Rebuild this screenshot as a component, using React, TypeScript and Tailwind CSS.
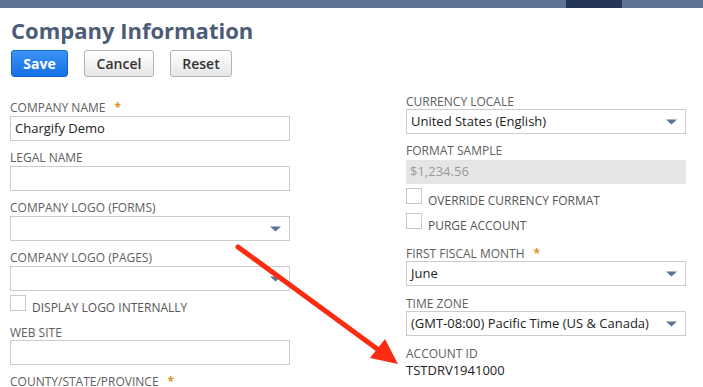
import React from "react";

const Tri = () => (
  <svg width="11" height="6" viewBox="0 0 11 6" className="shrink-0">
    <path d="M0 0.5 H11 L5.5 5.5 Z" fill="#5b7393" />
  </svg>
);

const Label = ({ text, req, cls = "" }: { text: string; req?: boolean; cls?: string }) => (
  <div className={`h-[16px] text-[12px] leading-[20px] text-[#606060] flex ${cls}`}>
    <span>{text}</span>
    {req && <span className="ml-[9px] text-[#d8961c] font-bold">*</span>}
  </div>
);

const Input = ({ value = "", cls = "" }: { value?: string; cls?: string }) => (
  <div className={`h-[25px] border border-[#cccccc] bg-white flex items-center px-[4px] text-[13px] text-[#222222] ${cls}`}>
    {value}
  </div>
);

const Select = ({ value = "", cls = "" }: { value?: string; cls?: string }) => (
  <div className={`h-[25px] border border-[#cccccc] bg-white flex items-center justify-between pl-[4px] pr-[8px] text-[13px] text-[#222222] ${cls}`}>
    <span>{value}</span>
    <Tri />
  </div>
);

const Check = ({ text, cls = "" }: { text: string; cls?: string }) => (
  <div className={`flex items-start h-[19px] ${cls}`}>
    <div className="w-[16px] h-[16px] border border-[#c8c8c8] bg-white shrink-0" />
    <span className="ml-[6px] mt-[5px] text-[12px] leading-[16px] text-[#555555]">{text}</span>
  </div>
);

export default function App() {
  return (
    <div className="relative w-[703px] h-[387px] overflow-hidden bg-white font-['Open_Sans',sans-serif]">
      <div className="h-[8px] bg-[#607496] flex">
        <div className="ml-[566px] w-[56px] bg-[#243658]" />
      </div>
      <h1 className="ml-[11px] mt-[6px] text-[22px] leading-[32px] font-bold text-[#4c5b76]">Company Information</h1>
      <div className="flex mt-[4px] ml-[11px] h-[27px]">
        <button className="w-[57px] h-[27px] rounded-[3px] border border-[#1563cc] bg-gradient-to-b from-[#3b92f8] to-[#1570e6] text-white text-[14px] font-bold">Save</button>
        <button className="ml-[16px] w-[70px] h-[27px] rounded-[3px] border border-[#b3b3b3] bg-gradient-to-b from-[#ffffff] to-[#e6e6e6] text-[#333333] text-[14px] font-semibold">Cancel</button>
        <button className="ml-[16px] w-[62px] h-[27px] rounded-[3px] border border-[#b3b3b3] bg-gradient-to-b from-[#ffffff] to-[#e6e6e6] text-[#333333] text-[14px] font-semibold">Reset</button>
      </div>
      <div className="flex pl-[10px] gap-[116px]">
        <div className="w-[280px] flex flex-col mt-[21px]">
          <Label text="COMPANY NAME" req />
          <Input value="Chargify Demo" cls="mt-[2px]" />
          <Label text="LEGAL NAME" cls="mt-[7px]" />
          <Input cls="mt-[2px]" />
          <Label text="COMPANY LOGO (FORMS)" cls="mt-[7px]" />
          <Select cls="mt-[2px]" />
          <Label text="COMPANY LOGO (PAGES)" cls="mt-[7px]" />
          <Select cls="mt-[2px]" />
          <Check text="DISPLAY LOGO INTERNALLY" cls="mt-[4px]" />
          <Label text="WEB SITE" cls="mt-[9px]" />
          <Input cls="mt-[1px]" />
          <Label text="COUNTY/STATE/PROVINCE" req cls="mt-[7px]" />
        </div>
        <div className="w-[280px] flex flex-col mt-[15px]">
          <Label text="CURRENCY LOCALE" />
          <Select value="United States (English)" cls="mt-[1px]" />
          <Label text="FORMAT SAMPLE" cls="mt-[7px]" />
          <div className="mt-[3px] h-[24px] bg-[#e5e5e5] flex items-center px-[4px] text-[13px] text-[#9a9a9a]">$1,234.56</div>
          <Check text="OVERRIDE CURRENCY FORMAT" cls="mt-[4px]" />
          <Check text="PURGE ACCOUNT" cls="mt-[6px]" />
          <Label text="FIRST FISCAL MONTH" req cls="mt-[12px]" />
          <Select value="June" cls="mt-[1px]" />
          <Label text="TIME ZONE" cls="mt-[8px]" />
          <Select value="(GMT-08:00) Pacific Time (US & Canada)" cls="mt-[1px]" />
          <Label text="ACCOUNT ID" cls="mt-[8px]" />
          <div className="text-[13px] leading-[20px] text-[#222222]">TSTDRV1941000</div>
        </div>
      </div>
      <svg className="absolute left-0 top-0 pointer-events-none" width="703" height="387" viewBox="0 0 703 387">
        <line x1="238" y1="247" x2="380" y2="351" stroke="#fb2c12" strokeWidth="5" strokeLinecap="round" />
        <polygon points="385,339 370,358 398,364" fill="#fb2c12" />
      </svg>
    </div>
  );
}
